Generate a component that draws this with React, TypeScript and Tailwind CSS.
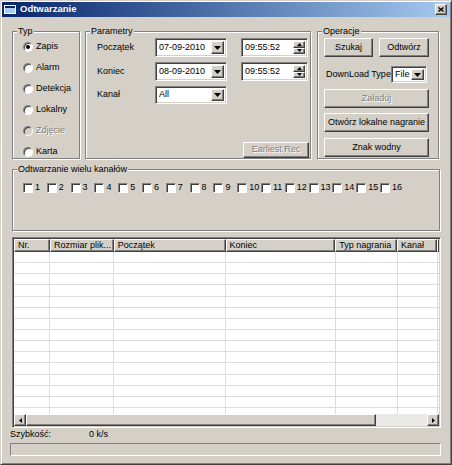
const raised =
  'border border-t-white border-l-white border-r-[#404040] border-b-[#404040] shadow-[inset_-1px_-1px_0_#808080] bg-[#d4d0c8]'
const sunken =
  'border border-t-[#808080] border-l-[#808080] border-r-white border-b-white shadow-[inset_1px_1px_0_#404040,inset_-1px_-1px_0_#d4d0c8]'
const disabledText = 'text-[#808080] [text-shadow:1px_1px_0_#fff]'

function Group({ label, className, children }: { label: string; className: string; children?: React.ReactNode }) {
  return (
    <fieldset
      className={`border border-[#808080] shadow-[inset_1px_1px_0_#fff,1px_1px_0_#fff] ${className}`}
    >
      <legend className="ml-[4px] px-px bg-[#d4d0c8] leading-[11px]">{label}</legend>
      {children}
    </fieldset>
  )
}

function Button({ label, className, disabled }: { label: string; className: string; disabled?: boolean }) {
  return (
    <div className={`${raised} flex items-center justify-center whitespace-nowrap ${disabled ? disabledText : ''} ${className}`}>
      {label}
    </div>
  )
}

function DownArrow() {
  return (
    <svg width="7" height="4" viewBox="0 0 7 4">
      <path d="M0 0h7L3.5 4z" fill="#000" />
    </svg>
  )
}

function Combo({ value, className }: { value: string; className: string }) {
  return (
    <div className={`${sunken} flex bg-white p-[2px] ${className}`}>
      <div className="flex flex-1 items-center pl-px">{value}</div>
      <div className={`${raised} flex w-[13px] items-center justify-center`}>
        <DownArrow />
      </div>
    </div>
  )
}

function TimeBox({ value }: { value: string }) {
  return (
    <div className={`${sunken} flex h-[19px] w-[67px] bg-white p-[2px]`}>
      <div className="flex flex-1 items-center pl-px">{value}</div>
      <div className="flex w-[12px] flex-col">
        <div className={`${raised} flex flex-1 items-center justify-center`}>
          <svg width="5" height="3" viewBox="0 0 5 3">
            <path d="M2.5 0L5 3H0z" fill="#000" />
          </svg>
        </div>
        <div className={`${raised} flex flex-1 items-center justify-center`}>
          <svg width="5" height="3" viewBox="0 0 5 3">
            <path d="M0 0h5L2.5 3z" fill="#000" />
          </svg>
        </div>
      </div>
    </div>
  )
}

function Radio({ label, checked, disabled }: { label: string; checked?: boolean; disabled?: boolean }) {
  return (
    <div className="flex h-[21px] items-center gap-[3px]">
      <span
        className={`flex h-[10px] w-[10px] items-center justify-center rounded-full border border-t-[#808080] border-l-[#808080] border-r-white border-b-white shadow-[inset_1px_1px_0_#404040] ${disabled ? 'bg-[#d4d0c8]' : 'bg-white'}`}
      >
        {checked && <span className="h-[4px] w-[4px] rounded-full bg-black" />}
      </span>
      <span className={disabled ? disabledText : ''}>{label}</span>
    </div>
  )
}

const columns = [
  { name: 'Nr.', w: 'w-[36px]' },
  { name: 'Rozmiar plik...', w: 'w-[64px]' },
  { name: 'Początek', w: 'w-[112px]' },
  { name: 'Koniec', w: 'w-[110px]' },
  { name: 'Typ nagrania', w: 'w-[62px]' },
  { name: 'Kanał', w: 'w-[40px]' },
]

const channels = Array.from({ length: 16 }, (_, i) => i + 1)
const rows = Array.from({ length: 15 }, (_, i) => i)

export default function App() {
  return (
    <div className="h-[465px] w-[452px] overflow-hidden bg-[#d4d0c8] font-['Liberation_Sans',Arial,sans-serif] text-[9px] text-black">
      <div className="h-full w-full border border-t-[#d4d0c8] border-l-[#d4d0c8] border-r-[#404040] border-b-[#404040] p-px shadow-[inset_1px_1px_0_#fff,inset_-1px_-1px_0_#808080]">
        {/* title bar */}
        <div className="flex h-[15px] items-center bg-gradient-to-r from-[#0a246a] to-[#a6caf0]">
          <svg width="12" height="9" viewBox="0 0 12 9" className="ml-[2px]">
            <rect x="0" y="0" width="12" height="9" fill="#fff" />
            <rect x="1" y="1" width="10" height="2" fill="#0a246a" />
            <rect x="1" y="3" width="10" height="5" fill="#a6caf0" />
          </svg>
          <span className="ml-[4px] text-[9.5px] font-bold text-white">Odtwarzanie</span>
          <div className={`${raised} ml-auto mr-[3px] flex h-[11px] w-[12px] items-center justify-center`}>
            <svg width="6" height="5" viewBox="0 0 6 5">
              <path d="M0.5 0.5L5.5 4.5M5.5 0.5L0.5 4.5" stroke="#000" strokeWidth="1.4" />
            </svg>
          </div>
        </div>

        <div className="px-[10px]">
          <div className="mt-[9px] flex">
            <Group label="Typ" className="h-[133px] w-[68px]">
              <div className="-mt-px flex flex-col pl-[10px]">
                <Radio label="Zapis" checked />
                <Radio label="Alarm" />
                <Radio label="Detekcja" />
                <Radio label="Lokalny" />
                <Radio label="Zdjęcie" disabled />
                <Radio label="Karta" />
              </div>
            </Group>

            <Group label="Parametry" className="ml-[5px] h-[133px] w-[226px]">
              <div className="flex h-[121px] flex-col pl-[11px]">
                <div className="mt-px flex h-[19px] items-center">
                  <span className="w-[58px]">Początek</span>
                  <Combo value="07-09-2010" className="h-[19px] w-[72px]" />
                  <div className="ml-[14px]">
                    <TimeBox value="09:55:52" />
                  </div>
                </div>
                <div className="mt-[5px] flex h-[19px] items-center">
                  <span className="w-[58px]">Koniec</span>
                  <Combo value="08-09-2010" className="h-[19px] w-[72px]" />
                  <div className="ml-[14px]">
                    <TimeBox value="09:55:52" />
                  </div>
                </div>
                <div className="mt-[5px] flex h-[18px] items-center">
                  <span className="w-[58px]">Kanał</span>
                  <Combo value="All" className="h-[18px] w-[72px]" />
                </div>
                <Button label="Earliest Rec" disabled className="mt-auto mr-px h-[16px] w-[66px] self-end" />
              </div>
            </Group>

            <Group label="Operacje" className="ml-[6px] h-[133px] w-[122px]">
              <div className="flex flex-col pl-[6px]">
                <div className="mt-px flex">
                  <Button label="Szukaj" className="h-[19px] w-[49px]" />
                  <Button label="Odtwórz" className="ml-[6px] h-[19px] w-[50px]" />
                </div>
                <div className="mt-[9px] flex h-[17px] items-center">
                  <span className="w-[65px] whitespace-nowrap pl-[2px]">DownLoad Type</span>
                  <Combo value="File" className="ml-[2px] h-[17px] w-[36px]" />
                </div>
                <Button label="Załaduj" disabled className="mt-[6px] h-[19px] w-[105px]" />
                <Button label="Otwórz lokalne nagranie" className="mt-[5px] h-[19px] w-[105px]" />
                <Button label="Znak wodny" className="mt-[6px] h-[19px] w-[105px]" />
              </div>
            </Group>
          </div>

          <Group label="Odtwarzanie wielu kanałów" className="mt-[5px] h-[67px] w-[428px]">
            <div className="mt-[7px] flex pl-[10px]">
              {channels.map((n) => (
                <div key={n} className="flex h-[12px] w-[23.8px] shrink-0 items-center gap-[2px]">
                  <span className="h-[10px] w-[10px] shrink-0 border border-t-[#808080] border-l-[#808080] border-r-white border-b-white bg-white shadow-[inset_1px_1px_0_#404040]" />
                  <span>{n}</span>
                </div>
              ))}
            </div>
          </Group>

          {/* list view */}
          <div className={`${sunken} mt-[6px] h-[191px] w-[429px] bg-white p-px`}>
            <div className="flex h-[13px]">
              {columns.map((c) => (
                <div key={c.name} className={`${raised} ${c.w} flex items-center overflow-hidden whitespace-nowrap pl-[3px]`}>
                  {c.name}
                </div>
              ))}
              <div className={`${raised} flex-1`} />
            </div>
            <div className="h-[162px] overflow-hidden">
              {rows.map((r) => (
                <div key={r} className="flex h-[11.15px] border-b border-[#dcdcdc]">
                  {columns.map((c) => (
                    <div key={c.name} className={`${c.w} border-r border-[#dcdcdc]`} />
                  ))}
                </div>
              ))}
            </div>
            <div className="flex h-[12px]">
              <div className={`${raised} flex w-[12px] items-center justify-center`}>
                <svg width="3" height="5" viewBox="0 0 3 5">
                  <path d="M3 0v5L0 2.5z" fill="#000" />
                </svg>
              </div>
              <div className={`${raised} w-[350px]`} />
              <div className="flex-1 bg-[#ebe9e5]" />
              <div className={`${raised} flex w-[12px] items-center justify-center`}>
                <svg width="3" height="5" viewBox="0 0 3 5">
                  <path d="M0 0v5L3 2.5z" fill="#000" />
                </svg>
              </div>
            </div>
          </div>

          <div className="-ml-[2px] mt-px flex h-[12px] items-center">
            <span className="w-[79px]">Szybkość:</span>
            <span>0 k/s</span>
          </div>
          <div className="-ml-[2px] mt-[2px] h-[13px] w-[431px] border border-t-[#808080] border-l-[#808080] border-r-white border-b-white" />
        </div>
      </div>
    </div>
  )
}
